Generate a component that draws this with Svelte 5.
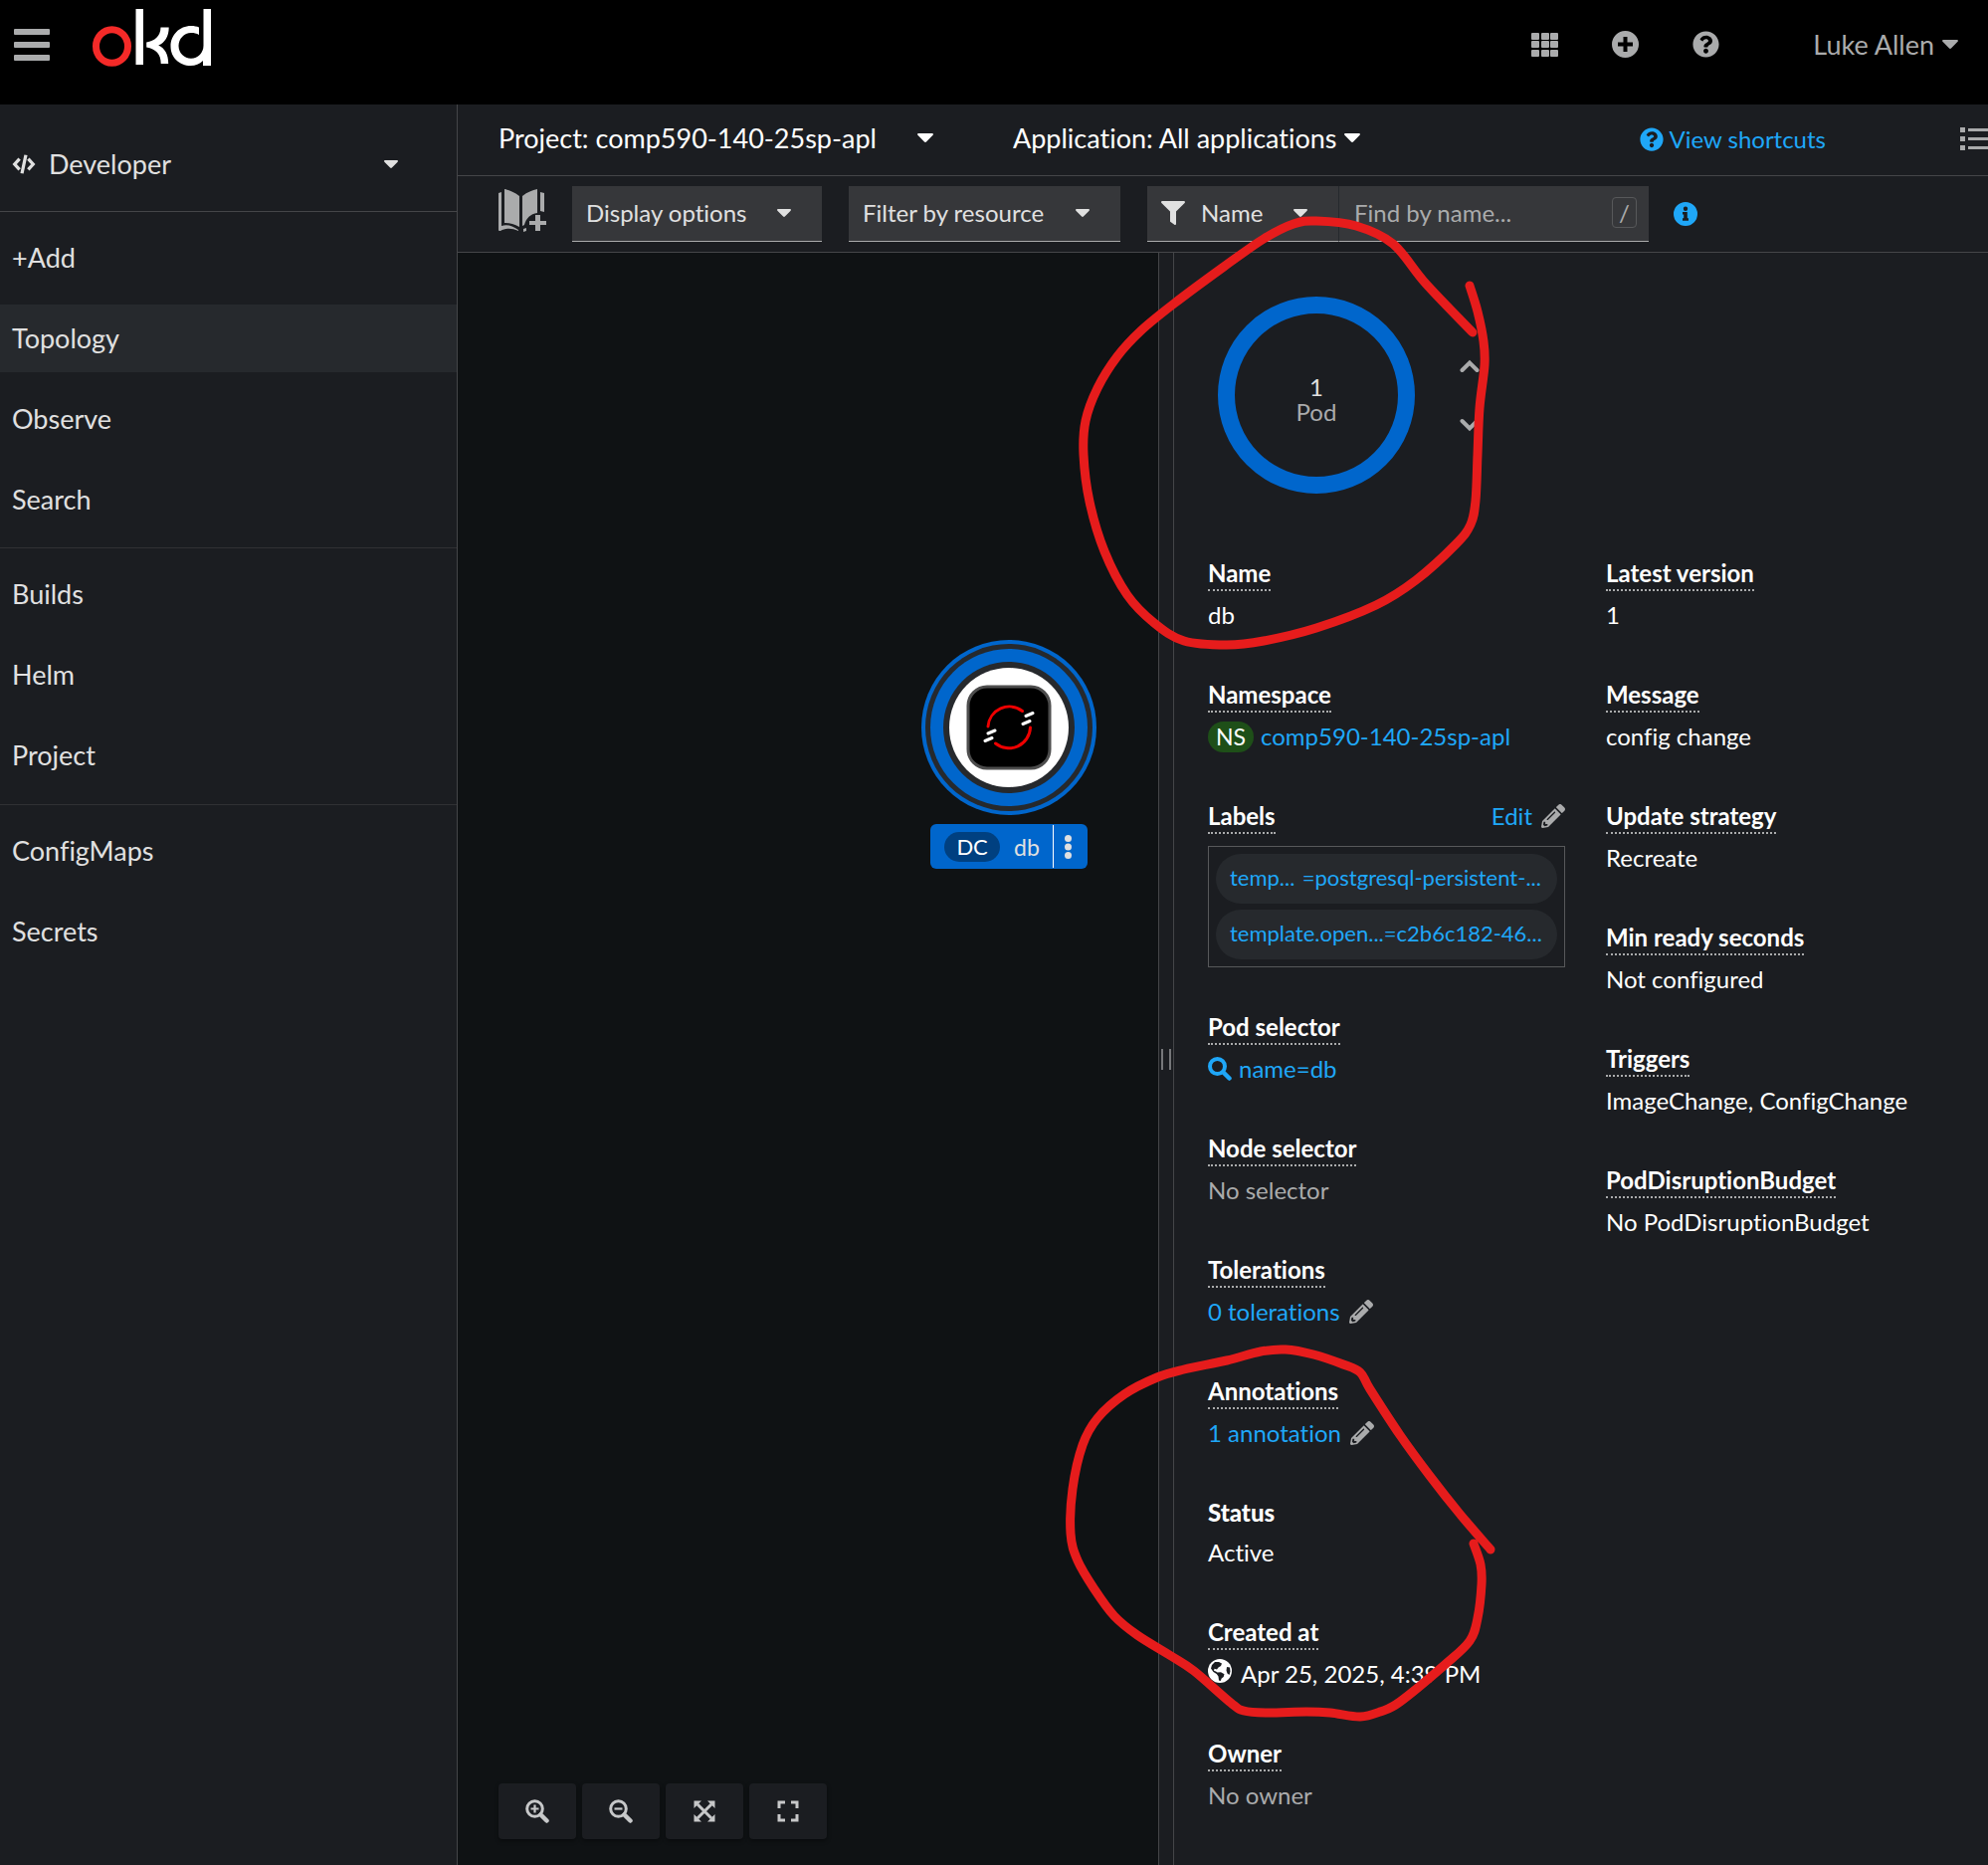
<script>
  const navGroups = [
    ['+Add', 'Topology', 'Observe', 'Search'],
    ['Builds', 'Helm', 'Project'],
    ['ConfigMaps', 'Secrets'],
  ];
  const active = 'Topology';

  const rightDetails = [
    ['Latest version', '1'],
    ['Message', 'config change'],
    ['Update strategy', 'Recreate'],
    ['Min ready seconds', 'Not configured'],
    ['Triggers', 'ImageChange, ConfigChange'],
    ['PodDisruptionBudget', 'No PodDisruptionBudget'],
  ];

  const chips = [
    ['temp...', '=postgresql-persistent-...'],
    ['template.open...', '=c2b6c182-46...'],
  ];

  // Freehand marker strokes, as points the pen passed through.
  const strokes = [
    [[1477,287],[1485,313],[1491,343],[1492,367],[1487,410],[1485,457],[1483,503],[1478,527],[1463,547],[1423,583],[1383,608],[1323,631],[1270,644],[1233,648],[1190,644],[1160,626],[1133,598],[1110,554],[1095,504],[1089,457],[1091,423],[1103,390],[1123,358],[1147,332],[1180,305],[1230,268],[1270,240],[1300,225],[1323,222],[1363,227],[1400,245],[1433,285],[1480,334]],
    [[1481,1551],[1488,1572],[1489,1592],[1485,1626],[1477,1649],[1453,1672],[1407,1710],[1387,1720],[1367,1725],[1337,1721],[1313,1720],[1273,1721],[1250,1719],[1237,1711],[1200,1679],[1177,1664],[1143,1643],[1120,1624],[1100,1597],[1083,1568],[1076,1541],[1078,1496],[1088,1452],[1103,1425],[1130,1401],[1163,1384],[1190,1376],[1233,1367],[1267,1358],[1292,1356],[1320,1361],[1350,1371],[1367,1379],[1377,1396],[1407,1442],[1437,1483],[1467,1521],[1498,1557]],
  ];

  // Smooth curve through all points (Catmull-Rom turned into cubic Béziers).
  function smooth(p) {
    let d = `M${p[0][0]} ${p[0][1]}`;
    for (let i = 0; i < p.length - 1; i++) {
      const a = p[i - 1] ?? p[i];
      const b = p[i];
      const c = p[i + 1];
      const e = p[i + 2] ?? c;
      d += `C${b[0] + (c[0] - a[0]) / 6} ${b[1] + (c[1] - a[1]) / 6} ${c[0] - (e[0] - b[0]) / 6} ${c[1] - (e[1] - b[1]) / 6} ${c[0]} ${c[1]}`;
    }
    return d;
  }

  let search = $state('');
</script>

{#snippet caret(cls)}
  <svg class={cls} viewBox="0 0 16 9" aria-hidden="true"><path d="M1.200 0h13.600c1 0 1.500 1.100.8 1.800L9 8.500a1.400 1.400 0 0 1-2 0L.4 1.800C-.3 1.100.2 0 1.200 0z" /></svg>
{/snippet}

{#snippet question(cls)}
  <svg class={cls} viewBox="0 0 512 512" aria-hidden="true"><path d="M504 256c0 137-111 248-248 248S8 393 8 256C8 119.100 119 8 256 8s248 111.100 248 248zM262.700 90c-54.500 0-89.300 23-116.500 63.800-3.500 5.300-2.400 12.400 2.700 16.300l34.700 26.300c5.200 3.900 12.600 3 16.700-2.100 17.900-22.700 30.100-35.800 57.300-35.800 20.400 0 45.700 13.100 45.700 33 0 15-12.400 22.700-32.500 34C247.100 238.500 216 255 216 296v4c0 6.600 5.400 12 12 12h56c6.600 0 12-5.400 12-12v-1.300c0-28.700 83.800-29.900 83.800-107.500C379.800 132.800 319.200 90 262.700 90zM256 338c-25.400 0-46 20.600-46 46s20.600 46 46 46 46-20.600 46-46-20.600-46-46-46z" /></svg>
{/snippet}

{#snippet pencil()}
  <svg class="icon pencil" viewBox="0 0 512 512" aria-hidden="true"><path d="M498 142l-46 46c-5 5-13 5-17 0L324 77c-5-5-5-12 0-17l46-46c19-19 49-19 68 0l60 60c19 19 19 49 0 68zm-214-42L22 362 0 484c-3 16 12 30 28 28l122-22 262-262c5-5 5-13 0-17L301 100c-4-5-12-5-17 0zM124 340c-5-6-5-14 0-20l154-154c6-5 14-5 20 0s5 14 0 20L144 340c-6 5-14 5-20 0zm-36 84h48v36l-64 12-32-31 12-65h36v48z" /></svg>
{/snippet}

<div class="page">
  <header class="masthead">
    <button class="plain" aria-label="Toggle navigation">
      <svg class="burger" viewBox="0 0 36 32"><rect y="0" width="36" height="6" rx="1" /><rect y="13" width="36" height="6" rx="1" /><rect y="26" width="36" height="6" rx="1" /></svg>
    </button>
    <a class="logo" href="#home" aria-label="okd">
      <svg viewBox="0 0 120 60">
        <ellipse cx="19.500" cy="38.500" rx="16" ry="16.800" fill="none" stroke="#f42a28" stroke-width="7" />
        <path d="M43.500 1h7.500v56h-7.500z" />
        <path d="M68.500 19.500h8.200c0 9-4 15.500-10.500 18 6.500 3 10 9 10 18.500h-7.500c0-10-5-14.500-14.500-16.500v-5c8.500-1.500 14-6 14.300-15z" />
        <path d="M111.500 1h7.500v57h-8v-5c-3.500 3.500-7.500 5-12.500 5-11 0-20-8-20-19.500s9-20.500 20.500-20.500c3 0 6 .5 8 1.500v7.500c-2.500-1.400-5-2-8-2-7 0-12.500 6-12.500 13s5.500 12.800 12.500 12.800 12.500-5.800 12.500-13z" />
      </svg>
    </a>
    <div class="tools">
      <button class="plain" aria-label="Application launcher">
        <svg class="icon-lg" viewBox="0 0 27 27">{#each [2, 10, 19] as y}{#each [0, 10, 19] as x}<rect {x} {y} width="8" height="7" rx="1" />{/each}{/each}</svg>
      </button>
      <button class="plain" aria-label="Quick create">
        <svg class="icon-lg" viewBox="0 0 27 27"><path fill-rule="evenodd" d="M13.500 0a13.500 13.500 0 1 0 0 27 13.500 13.500 0 0 0 0-27zM11.500 6h4v5.500H21v4h-5.500V21h-4v-5.500H6v-4h5.500z" /></svg>
      </button>
      <button class="plain" aria-label="Help">{@render question('icon-lg')}</button>
      <button class="plain user">Luke Allen {@render caret('caret')}</button>
    </div>
  </header>

  <div class="body">
    <nav class="sidebar" aria-label="Main">
      <div class="perspective">
        <svg class="code" viewBox="0 0 22 18" aria-hidden="true"><path fill="none" stroke="currentColor" stroke-width="3" d="M7 4L2.500 9 7 14M15 4l4.500 5L15 14M12.800.5L9.200 17.500" /></svg>
        <select class="bare" aria-label="Perspective"><option>Developer</option></select>
        {@render caret('caret small')}
      </div>
      {#each navGroups as group}
        <ul>
          {#each group as item}
            <li><a href="#{item}" class:current={item === active}>{item}</a></li>
          {/each}
        </ul>
      {/each}
    </nav>

    <main>
      <div class="context">
        <div class="picker project">
          <select class="bare" aria-label="Project"><option>Project: comp590-140-25sp-apl</option></select>
          {@render caret('caret')}
        </div>
        <div class="picker">
          <select class="bare" aria-label="Application"><option>Application: All applications</option></select>
          {@render caret('caret')}
        </div>
        <button class="plain shortcuts">{@render question('icon')}View shortcuts</button>
        <button class="plain list" aria-label="List view">
          <svg viewBox="0 0 28 23"><path d="M0 0h5v5H0zM8 1h20v3H8zM0 9h5v5H0zM8 10h20v3H8zM0 18h5v5H0zM8 19h20v3H8z" /></svg>
        </button>
      </div>

      <div class="toolbar">
        <button class="plain catalog" aria-label="Add to project">
          <svg viewBox="0 0 48 44"><path d="M6 1c5 1 10 3 15 7v31c-5-3-10-4-15-4zM39 1v24c-7 1-11 5-13 12l-2 1V8c5-4 10-6 15-7zM0 5l3-1v34c6-2 11 0 17 4v1c-7-3-12-3-18 0-1 0-2 0-2-1zM42 4l4 1v19l-4-1zM25 41l3-1v3l-3 1zM37 27h5v6h6v4h-6v6h-5v-6h-6v-4h6z" /></svg>
        </button>
        <div class="field display">
          <select aria-label="Display options"><option>Display options</option></select>
          {@render caret('caret small')}
        </div>
        <div class="field resource">
          <select aria-label="Filter by resource"><option>Filter by resource</option></select>
          {@render caret('caret small')}
        </div>
        <div class="filter">
          <div class="field name">
            <svg class="icon funnel" viewBox="0 0 24 24" aria-hidden="true"><path d="M1.200 0h21.600c1 0 1.500 1.200.8 1.900L15 10.500V23c0 .9-1 1.300-1.700.8l-3.800-2.700c-.3-.2-.5-.5-.5-.9v-9.700L.4 1.900C-.3 1.200.2 0 1.200 0z" /></svg>
            <select aria-label="Filter attribute"><option>Name</option></select>
            {@render caret('caret small')}
          </div>
          <div class="field find">
            <input type="text" aria-label="Find by name" placeholder="Find by name..." bind:value={search} />
            <kbd>/</kbd>
          </div>
        </div>
        <button class="plain info" aria-label="Search help">
          <svg class="icon" viewBox="0 0 24 24"><path fill-rule="evenodd" d="M12 0a12 12 0 1 0 0 24 12 12 0 0 0 0-24zM12 4.500a2.200 2.200 0 1 1 0 4.400 2.200 2.200 0 0 1 0-4.400zM9 10h4.800v6.200H15v2.500H9v-2.500h1.200v-3.700H9z" /></svg>
        </button>
      </div>

      <div class="split">
        <section class="canvas" aria-label="Topology">
          <div class="node">
            <svg viewBox="0 0 176 176" aria-label="db deployment">
              <circle cx="88" cy="88" r="88" fill="#06c" />
              <circle cx="88" cy="88" r="84" fill="#26292d" />
              <circle cx="88" cy="88" r="79" fill="#06c" />
              <circle cx="88" cy="88" r="66" fill="#26292d" />
              <circle cx="88" cy="88" r="60" fill="#fff" />
              <rect x="47" y="47" width="82" height="82" rx="19" fill="#000" stroke="#4d4d4d" stroke-width="3" />
              <path d="M67 87a21.500 21.500 0 0 1 34.500-15.500M109.500 88a21.500 21.500 0 0 1-35 16" fill="none" stroke="#e00" stroke-width="3" stroke-linecap="round" />
              <path d="M105 76.500l7-3M102 84.500l7-3M67 94l7-3M64 101.500l7-3" stroke="#fff" stroke-width="3" stroke-linecap="round" />
            </svg>
            <div class="tag">
              <span class="kind">DC</span>
              <span class="title">db</span>
              <button class="plain kebab" aria-label="Actions">
                <svg viewBox="0 0 7 24"><circle cx="3.500" cy="3.500" r="3.500" /><circle cx="3.500" cy="12" r="3.500" /><circle cx="3.500" cy="20.500" r="3.500" /></svg>
              </button>
            </div>
          </div>
          <div class="zoom">
            <button aria-label="Zoom in"><svg viewBox="0 0 24 24"><circle cx="9.500" cy="9.500" r="7.800" /><path d="M15.500 15.500l6 6" stroke-width="4.500" stroke-linecap="round" /><path d="M5.500 9.500h8M9.500 5.500v8" stroke-width="2.200" /></svg></button>
            <button aria-label="Zoom out"><svg viewBox="0 0 24 24"><circle cx="9.500" cy="9.500" r="7.800" /><path d="M15.500 15.500l6 6" stroke-width="4.500" stroke-linecap="round" /><path d="M5.500 9.500h8" stroke-width="2.200" /></svg></button>
            <button aria-label="Fit to screen"><svg viewBox="0 0 24 24"><path d="M5 5l14 14M19 5L5 19" /><path class="solid" d="M1.500 1.500H9l-7.500 7.500zM22.500 1.500H15l7.500 7.500zM1.500 22.500H9L1.500 15zM22.500 22.500H15l7.500-7.500z" /></svg></button>
            <button aria-label="Reset view"><svg viewBox="0 0 24 24"><path d="M9 3H3v6M15 3h6v6M9 21H3v-6M15 21h6v-6" /></svg></button>
          </div>
        </section>

        <div class="splitter" role="separator" aria-label="Resize"><i></i></div>

        <aside class="details">
          <div class="pods">
            <div class="donut"><span class="count">1</span><span>Pod</span></div>
            <div class="steps">
              <button class="plain" aria-label="Increase the Pod count"><svg viewBox="0 0 20 14"><path d="M2.500 11L10 3.500l7.500 7.500" /></svg></button>
              <button class="plain" aria-label="Decrease the Pod count"><svg viewBox="0 0 20 14"><path d="M2.500 3l7.500 7.500L17.500 3" /></svg></button>
            </div>
          </div>
          <div class="columns">
            <dl>
              <div><dt><span>Name</span></dt><dd>db</dd></div>
              <div><dt><span>Namespace</span></dt><dd><span class="ns">NS</span><a href="#ns">comp590-140-25sp-apl</a></dd></div>
              <div class="labels">
                <dt><span>Labels</span><button class="plain edit">Edit {@render pencil()}</button></dt>
                <dd>
                  {#each chips as [key, value]}
                    <a class="chip" href="#label"><span>{key}</span><span>{value}</span></a>
                  {/each}
                </dd>
              </div>
              <div><dt><span>Pod selector</span></dt><dd><a class="selector" href="#pods"><svg class="icon" viewBox="0 0 24 24" aria-hidden="true"><circle cx="9.500" cy="9.500" r="7.500" fill="none" stroke="currentColor" stroke-width="4" /><path d="M15.500 15.500l6 6" stroke="currentColor" stroke-width="4.500" stroke-linecap="round" /></svg>name=db</a></dd></div>
              <div><dt><span>Node selector</span></dt><dd class="muted">No selector</dd></div>
              <div><dt><span>Tolerations</span></dt><dd><button class="plain edit">0 tolerations {@render pencil()}</button></dd></div>
              <div><dt><span>Annotations</span></dt><dd><button class="plain edit">1 annotation {@render pencil()}</button></dd></div>
              <div><dt><b>Status</b></dt><dd>Active</dd></div>
              <div>
                <dt><span>Created at</span></dt>
                <dd class="created">
                  <svg class="icon globe" viewBox="0 0 24 24" aria-hidden="true"><circle cx="12" cy="12" r="12" /><path class="land" d="M7 3l4 0 3 1.500-1 2.500-2.500 1.500L9 10.500 6.500 9.800l-.5 2 2 .7 1.500 1 3.500-.3 3.500 2-.8 2.800-2 1.500-1 2.500-1.700-.5-.5-4-1.800-2.500L5.500 13 3 9.500 4 6zM19 8l3 .5.5 4-1 3.500-2-1.500-1-3z" /></svg>
                  Apr 25, 2025, 4:39 PM
                </dd>
              </div>
              <div><dt><span>Owner</span></dt><dd class="muted">No owner</dd></div>
            </dl>
            <dl>
              {#each rightDetails as [term, value]}
                <div><dt><span>{term}</span></dt><dd>{value}</dd></div>
              {/each}
            </dl>
          </div>
        </aside>
      </div>
    </main>
  </div>

  <svg class="marker" aria-hidden="true">
    {#each strokes as points}<path d={smooth(points)} />{/each}
  </svg>
</div>

<style>
  :global(body) { margin: 0; background: #1b1d21; }

  .page {
    position: relative;
    display: flex;
    flex-direction: column;
    min-height: 100vh;
    overflow: hidden;
    font-family: Lato, "Open Sans", sans-serif;
    font-size: 24px;
    line-height: 36px;
    font-variant-ligatures: none;
    color: #fff;
    background: #1b1d21;
  }
  button, select, input { font: inherit; font-variant-ligatures: none; color: inherit; border-radius: 0; }
  button { cursor: pointer; }
  svg { display: block; flex: none; fill: currentColor; }
  a { color: #1fa7f8; text-decoration: none; }
  .plain { display: flex; align-items: center; padding: 0; border: 0; background: none; }
  select { appearance: none; border: 0; background: transparent; padding: 0; outline: none; }
  option { color: #fff; background: #1b1d21; }
  .bare { font-size: 27px; }

  .icon { width: 24px; height: 24px; }
  .icon-lg { width: 27px; height: 27px; }
  .caret { width: 16px; height: 9px; }
  .caret.small { width: 14px; height: 8px; }

  .masthead {
    display: flex;
    align-items: center;
    box-sizing: border-box;
    height: 105px;
    padding: 0 30px 16px 14px;
    color: #aaabac;
    background: #000;
  }
  .burger { width: 36px; height: 32px; }
  .logo { align-self: flex-start; margin: 8px 0 0 43px; color: #fff; }
  .logo svg { width: 120px; height: 60px; }
  .tools { display: flex; align-items: center; gap: 54px; margin-left: auto; }
  .user { gap: 8px; margin-left: 40px; font-size: 27px; }

  .body { display: flex; flex: 1; }
  .sidebar {
    box-sizing: border-box;
    flex: none;
    width: 460px;
    border-right: 1px solid #444548;
    font-size: 27px;
    color: #e0e0e0;
  }
  .perspective {
    display: flex;
    align-items: center;
    box-sizing: border-box;
    height: 108px;
    padding: 12px 59px 0 12px;
    border-bottom: 1px solid #444548;
  }
  .code { width: 24px; height: 20px; }
  .perspective select { flex: 1; padding-left: 13px; }
  .sidebar ul { margin: 0; padding: 12px 0 14px; list-style: none; }
  .sidebar ul + ul { padding-bottom: 15px; border-top: 1px solid #303134; }
  .sidebar li + li { margin-top: 13px; }
  .sidebar a { display: block; padding: 0 12px; line-height: 68px; color: inherit; }
  .sidebar .current { background: #26292d; }

  main { display: flex; flex-direction: column; flex: 1; min-width: 0; }
  .context {
    display: flex;
    align-items: center;
    box-sizing: border-box;
    height: 72px;
    padding: 0 0 2px 41px;
    border-bottom: 1px solid #444548;
  }
  .picker { display: flex; align-items: center; gap: 6px; padding-bottom: 2px; }
  .project { gap: 41px; margin-right: 80px; }
  .shortcuts { gap: 5px; margin-left: auto; color: #1fa7f8; }
  .list { margin-left: 135px; color: #aaabac; }
  .list svg { width: 28px; height: 23px; }

  .toolbar {
    display: flex;
    align-items: center;
    box-sizing: border-box;
    height: 77px;
    padding-left: 41px;
    border-bottom: 1px solid #444548;
    color: #e0e0e0;
  }
  .catalog { padding-bottom: 8px; margin-right: 26px; color: #aaabac; }
  .catalog svg { width: 48px; height: 44px; }
  .field {
    display: flex;
    align-items: center;
    box-sizing: border-box;
    height: 56px;
    padding: 0 31px 2px 14px;
    background: #36373a;
    border-bottom: 1px solid #aaabac;
  }
  .field select, .field input { flex: 1; min-width: 0; }
  .display { width: 251px; margin-right: 27px; }
  .resource { width: 273px; margin-right: 27px; }
  .filter { display: flex; }
  .name { width: 193px; border-right: 1px solid #26292d; gap: 16px; }
  .find { width: 311px; padding: 0 12px 2px 15px; }
  .find input { border: 0; padding: 0; background: transparent; outline: none; }
  .find input::placeholder { color: #aaabac; opacity: 1; }
  kbd {
    box-sizing: border-box;
    width: 25px;
    border: 1px solid #57585a;
    border-radius: 4px;
    font: inherit;
    line-height: 29px;
    text-align: center;
    color: #aaabac;
  }
  .info { margin-left: 25px; color: #1fa7f8; }

  .split { display: flex; flex: 1; }
  .canvas { position: relative; flex: 1; min-width: 0; background: #0f1214; }
  .node { position: absolute; left: 466px; top: 389px; display: flex; flex-direction: column; align-items: center; gap: 9px; }
  .node > svg { width: 176px; height: 176px; }
  .tag { display: flex; align-items: center; height: 45px; padding-left: 14px; border-radius: 6px; background: #06c; color: #e0e0e0; font-size: 23px; }
  .kind { width: 56px; border-radius: 15px; background: #004080; color: #fff; font-size: 22px; line-height: 30px; text-align: center; }
  .title { padding: 0 13px 0 14px; line-height: 34px; }
  .kebab { box-sizing: border-box; justify-content: center; width: 35px; height: 43px; padding-right: 4px; border-left: 1px solid #fff; }
  .kebab svg { width: 7px; height: 24px; }
  .zoom { position: absolute; left: 41px; bottom: 26px; display: flex; gap: 6px; }
  .zoom button {
    display: flex;
    align-items: center;
    justify-content: center;
    width: 78px;
    height: 56px;
    padding: 0;
    border: 0;
    border-radius: 4px;
    background: #1b1d21;
    color: #c7c8c9;
    box-shadow: 0 2px 4px rgba(0, 0, 0, 0.4);
  }
  .zoom svg { width: 24px; height: 24px; fill: none; stroke: currentColor; stroke-width: 3; }
  .zoom .solid { fill: currentColor; stroke: none; }

  .splitter {
    display: flex;
    align-items: center;
    justify-content: center;
    flex: none;
    width: 14px;
    border: solid #444548;
    border-width: 0 1px;
  }
  .splitter i { width: 6px; height: 21px; border: solid #76777a; border-width: 0 2px; }

  .details { flex: none; width: 818px; }
  .pods { display: flex; align-items: center; gap: 45px; padding: 44px 0 0 44px; }
  .donut {
    display: flex;
    flex-direction: column;
    align-items: center;
    justify-content: center;
    box-sizing: border-box;
    width: 198px;
    height: 198px;
    padding-top: 7px;
    border: 17px solid #06c;
    border-radius: 50%;
    line-height: 25px;
    color: #aaabac;
  }
  .count { color: #e0e0e0; }
  .steps { display: flex; flex-direction: column; gap: 45px; color: #aaabac; }
  .steps svg { width: 20px; height: 14px; fill: none; stroke: currentColor; stroke-width: 4; stroke-linecap: round; }

  .columns { display: grid; grid-template-columns: 359px 1fr; gap: 41px; padding: 64px 24px 0 34px; }
  dl { margin: 0; }
  dl > div { margin-bottom: 46px; }
  dl > div:last-child { margin-bottom: 24px; }
  dt { display: flex; align-items: flex-start; justify-content: space-between; font-weight: 700; line-height: 32px; }
  dt span { border-bottom: 2px dotted #aaabac; }
  dt button { font-weight: 400; }
  dd { display: flex; align-items: center; margin: 6px 0 0; }
  .muted { color: #aaabac; }
  .ns { width: 46px; margin-right: 7px; border-radius: 16px; background: #1e4f18; font-size: 23px; line-height: 31px; text-align: center; }
  .edit { gap: 9px; color: #1fa7f8; }
  .pencil { color: #aaabac; }
  .selector { display: flex; align-items: center; gap: 7px; }
  .created { gap: 9px; }
  .globe { padding-bottom: 6px; }
  .land { fill: #1b1d21; }
  .labels.labels { margin-bottom: 44px; }
  .labels dd { flex-direction: column; align-items: stretch; gap: 6px; margin-top: 12px; padding: 7px; border: 1px solid #57585a; }
  .chip { display: flex; justify-content: space-between; height: 50px; padding: 0 16px 0 14px; border-radius: 25px; background: #26292d; font-size: 22px; line-height: 47px; white-space: nowrap; }

  .marker { position: absolute; inset: 0; width: 100%; height: 100%; pointer-events: none; fill: none; stroke: #e61c1c; stroke-width: 9; stroke-linecap: round; stroke-linejoin: round; }
</style>
